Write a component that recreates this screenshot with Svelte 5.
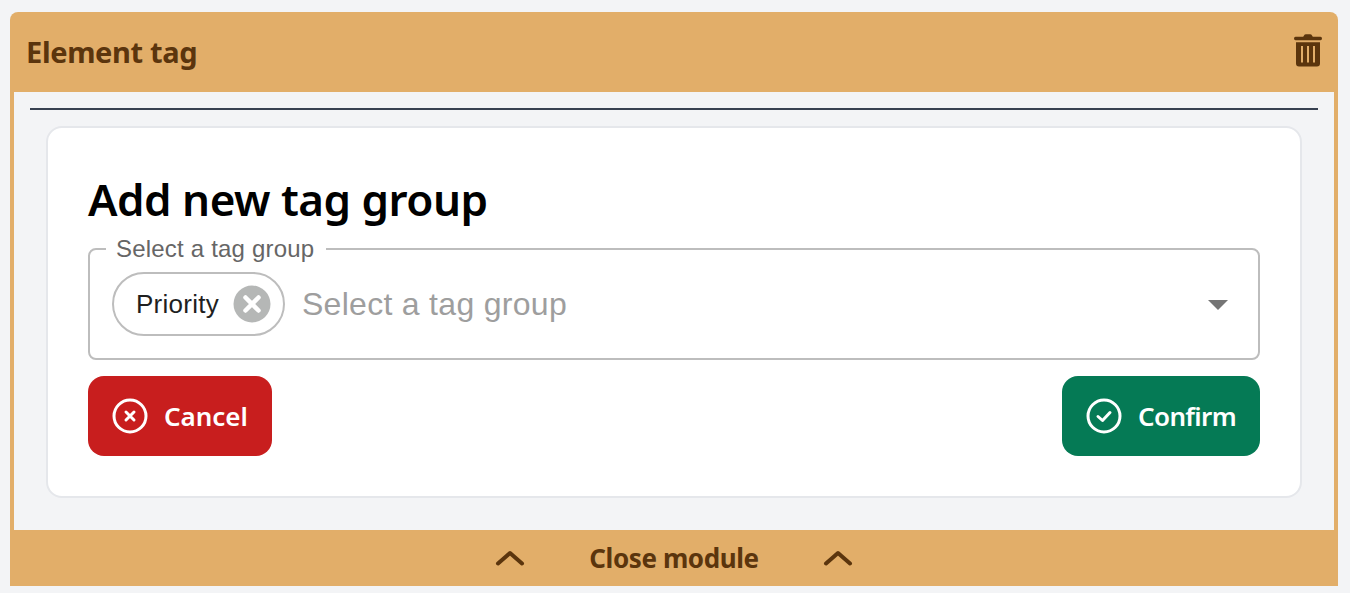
<script>
  const title = "Element tag";
  const label = "Select a tag group";
</script>

<div class="module">
  <header class="head">
    <h2>{title}</h2>
    <button class="trash" aria-label="Delete">
      <svg width="28" height="34" viewBox="0 0 28 34">
        <path fill="currentColor" d="M10 1.500 Q10.500 .2 12 .2 H16 Q17.500 .2 18 1.500 L18.800 2.800 H26.500 Q28 2.800 28 4.500 Q28 6.200 26.500 6.200 H1.500 Q0 6.200 0 4.500 Q0 2.800 1.500 2.800 H9.200 Z" />
        <path fill="currentColor" fill-rule="evenodd" d="M2 8.300 H26 V29.500 Q26 32.500 23 32.500 H5 Q2 32.500 2 29.500 Z M7 12 V28.500 H9 V12 Z M13 12 V28.500 H15 V12 Z M19 12 V28.500 H21 V12 Z" />
      </svg>
    </button>
  </header>

  <div class="body">
    <hr />
    <section class="card">
      <h1>Add new tag group</h1>
      <fieldset class="field">
        <legend>{label}</legend>
        <div class="control">
          <span class="chip">
            Priority
            <svg class="chip-x" width="38" height="38" viewBox="0 0 38 38">
              <circle cx="19" cy="19" r="18.500" fill="#b5b7b6" />
              <path d="M12.500 12.500 L25.500 25.500 M25.500 12.500 L12.500 25.500" stroke="#fff" stroke-width="4.500" stroke-linecap="round" />
            </svg>
          </span>
          <span class="placeholder">{label}</span>
          <span class="arrow"></span>
        </div>
      </fieldset>
      <div class="actions">
        <button class="btn cancel">
          <svg width="36" height="36" viewBox="0 0 36 36" fill="none" stroke="#fff" stroke-width="3" stroke-linecap="round" stroke-linejoin="round">
            <circle cx="18" cy="18" r="16" />
            <path d="M14 14 L22 22 M22 14 L14 22" />
          </svg>
          Cancel
        </button>
        <button class="btn confirm">
          <svg width="36" height="36" viewBox="0 0 36 36" fill="none" stroke="#fff" stroke-width="3" stroke-linecap="round" stroke-linejoin="round">
            <circle cx="18" cy="18" r="16" />
            <path d="M12 18.500 L16.500 22.500 L24 14.500" />
          </svg>
          Confirm
        </button>
      </div>
    </section>
  </div>

  <footer class="foot">
    <svg width="30" height="16" viewBox="0 0 30 16" fill="none" stroke="currentColor" stroke-width="4" stroke-linecap="round" stroke-linejoin="round"><path d="M3 13.500 L15 3 L27 13.500" /></svg>
    <span>Close module</span>
    <svg width="30" height="16" viewBox="0 0 30 16" fill="none" stroke="currentColor" stroke-width="4" stroke-linecap="round" stroke-linejoin="round"><path d="M3 13.500 L15 3 L27 13.500" /></svg>
  </footer>
</div>

<style>
  :global(body) {
    background: #f3f4f6;
    font-family: "Noto Sans", sans-serif;
  }

  .module {
    margin: 12px 12px 0 10px;
    display: flex;
    flex-direction: column;
  }

  .head {
    height: 80px;
    padding: 0 16px;
    background: #e2ae69;
    color: #5b350d;
    border-radius: 8px 8px 0 0;
    display: flex;
    align-items: center;
    justify-content: space-between;
  }

  h2 {
    margin: 0 0 2px;
    font-size: 29px;
    font-weight: 700;
    letter-spacing: -0.35px;
  }

  .trash {
    border: none;
    background: none;
    padding: 0;
    margin-bottom: 2px;
    color: inherit;
    display: flex;
  }

  .body {
    border: solid #e2ae69;
    border-width: 0 4px;
    padding: 16px 16px 32px;
    background: #f3f4f6;
  }

  hr {
    margin: 0 0 16px;
    border: none;
    height: 2px;
    background: #374151;
  }

  .card {
    background: #fff;
    border: 2px solid #e5e7eb;
    border-radius: 16px;
    margin: 0 16px;
    padding: 40px;
    height: 372px;
    box-sizing: border-box;
  }

  h1 {
    margin: 0;
    height: 80px;
    line-height: 62px;
    font-size: 44px;
    font-weight: 600;
    color: #000;
    letter-spacing: -0.5px;
  }

  .field {
    margin: -11px 0 0;
    padding: 0 22px;
    height: 123px;
    box-sizing: border-box;
    border: 2px solid #bdbdbd;
    border-radius: 8px;
    font-family: "Liberation Sans", sans-serif;
  }

  legend {
    margin-left: -6px;
    padding: 0 12px 1px 10px;
    font-size: 24px;
    letter-spacing: 0.2px;
    color: #666;
    line-height: 23px;
  }

  .control {
    display: flex;
    align-items: center;
    margin-top: 11px;
  }

  .chip {
    display: flex;
    align-items: center;
    gap: 14px;
    height: 64px;
    box-sizing: border-box;
    padding: 0 12px 0 22px;
    border: 2px solid #bdbdbd;
    border-radius: 32px;
    font-size: 26px;
    letter-spacing: 0.25px;
    color: #1f1f1f;
    margin-right: 17px;
  }

  .chip-x {
    flex: none;
  }

  .placeholder {
    flex: 1;
    font-size: 32px;
    letter-spacing: 0.3px;
    color: #9e9e9e;
  }

  .arrow {
    width: 0;
    height: 0;
    border: solid transparent;
    border-width: 10px 10px 0;
    border-top-color: #757575;
    margin: 2px 8px 0 0;
  }

  .actions {
    display: flex;
    justify-content: space-between;
    margin-top: 16px;
  }

  .btn {
    height: 80px;
    border: none;
    border-radius: 16px;
    color: #fff;
    font: 600 26px "Noto Sans", sans-serif;
    display: flex;
    align-items: center;
    gap: 16px;
    padding: 0 24px;
  }

  .cancel {
    background: #c81e1e;
    letter-spacing: -0.05px;
  }

  .confirm {
    background: #057a55;
    letter-spacing: -0.65px;
  }

  .foot {
    height: 56px;
    background: #e2ae69;
    color: #5b350d;
    display: flex;
    align-items: center;
    justify-content: center;
    gap: 64px;
    font-size: 26px;
    font-weight: 700;
    letter-spacing: -0.4px;
  }
</style>
